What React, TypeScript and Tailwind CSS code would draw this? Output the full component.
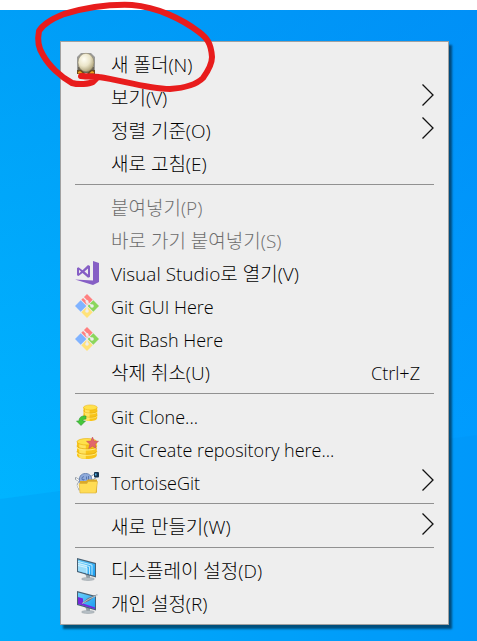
import clsx from "clsx";
import type { ReactNode } from "react";

const EggIcon = () => (
  <svg width="24" height="24" viewBox="0 0 24 24" aria-hidden="true">
    <defs>
      <radialGradient id="egg" cx="38%" cy="32%" r="75%">
        <stop offset="0" stopColor="#fffef4" />
        <stop offset="0.500" stopColor="#ebe5c9" />
        <stop offset="1" stopColor="#a3976c" />
      </radialGradient>
    </defs>
    <path d="M6 1h10l4 4v14H2V5z" fill="#9a9a98" />
    <path d="M3 15h16v6H3z" fill="#6b6558" />
    <path d="M2 18h5l3 4H2zM20 18h-5l-3 4h8z" fill="#6b4a1c" />
    <path d="M3 20l2-1 3 2.500H3zM19 20l-2-1-3 2.500h5z" fill="#f0a01c" />
    <ellipse cx="11" cy="10.500" rx="8" ry="9.200" fill="url(#egg)" stroke="#8b8162" strokeWidth="0.500" />
  </svg>
);

const VisualStudioIcon = () => (
  <svg width="24" height="24" viewBox="0 0 24 24" fill="#865fc5" aria-hidden="true">
    <path d="M18 0l6 2v19l-6 3L0 18.500l18 1z" />
    <path
      fillRule="evenodd"
      d="M2 7l1.500-.7L7.500 9.200 13 4l2 1v11l-2 .8-5.500-4.800-4 2.900L2 14.200zM4 8.800v3.600L6 10.600zM13 7.400L9.500 10.600 13 13.600z"
    />
  </svg>
);

const GitIcon = () => (
  <svg width="24" height="24" viewBox="0 0 24 24" aria-hidden="true">
    <path d="M12 0l5.700 5.700-5.700 5.700-5.700-5.700z" fill="#ff8080" />
    <path d="M18.300 6.300L24 12l-5.700 5.700L12.600 12z" fill="#8bd65c" />
    <path d="M12 12.600l5.700 5.700L12 24l-5.700-5.700z" fill="#ffe27a" />
    <path d="M5.700 6.300l5.700 5.700-5.700 5.700L0 12z" fill="#80b3ff" />
    <path d="M8 3l4 4v11M12 8l5 4" fill="none" stroke="#eee" strokeWidth="1.200" />
    <circle cx="12" cy="7.500" r="1.500" fill="#eee" />
    <circle cx="17" cy="12" r="1.800" fill="#eee" />
    <circle cx="12" cy="17" r="1.800" fill="#eee" />
  </svg>
);

const Cylinder = () => (
  <>
    <path d="M0 3v13c0 2 4 3.500 9 3.500s9-1.500 9-3.500V3z" fill="#f8c41a" />
    <path d="M2 5v13c1.500.8 4 1.300 6 1.300V6z" fill="#ffe35c" />
    <path
      d="M0 8c0 2 4 3 9 3s9-1 9-3M0 13c0 2 4 3 9 3s9-1 9-3"
      fill="none"
      stroke="#ffec80"
    />
    <path
      d="M0 7c0 2 4 3 9 3s9-1 9-3M0 12c0 2 4 3 9 3s9-1 9-3"
      fill="none"
      stroke="#e0a60c"
      strokeWidth="0.600"
    />
    <ellipse cx="9" cy="3.500" rx="9" ry="3" fill="#ffe14a" stroke="#e9b010" strokeWidth="0.600" />
  </>
);

const CloneIcon = () => (
  <svg width="24" height="24" viewBox="0 0 24 24" aria-hidden="true">
    <g transform="translate(8.500 0.500) scale(0.760 0.850)">
      <Cylinder />
    </g>
    <path
      d="M11 12c-4-.5-7 1-7 5H1.500l4.500 4.500 4.500-4.500H8c0-1.500 1-2 3-2z"
      fill="#45c83a"
      stroke="#2f9a30"
      strokeWidth="0.600"
    />
  </svg>
);

const CreateIcon = () => (
  <svg width="24" height="24" viewBox="0 0 24 24" aria-hidden="true">
    <g transform="translate(2 1) scale(1.100 1.080)">
      <Cylinder />
    </g>
    <path
      d="M17.500 0l1.600 4 4.400.3-3.400 2.900 1.200 4.300-3.800-2.300-3.800 2.300 1.200-4.300-3.400-2.900 4.400-.3z"
      fill="#e2666c"
      stroke="#c14a52"
      strokeWidth="0.500"
    />
  </svg>
);

const TortoiseIcon = () => (
  <svg width="24" height="24" viewBox="0 0 24 24" fill="none" aria-hidden="true">
    <path d="M0 8l5 3-2 4 2 5" stroke="#8b939b" strokeWidth="2.500" />
    <path d="M1 8.500l4 3-2 4 2 4" stroke="#fff" strokeWidth="1.500" />
    <path d="M14 10l6-4" stroke="#8b9dad" strokeWidth="5" />
    <path d="M14 10l6-4" stroke="#fff" strokeWidth="3" />
    <path d="M5 13C3 7 6 3.500 10.500 3.500S18 7 16.500 13z" fill="#8fabdc" stroke="#6b87b5" />
    <path d="M9 6.500L7 7.500v2l2 .5V9M11.500 6.500v3M13.500 6v4" stroke="#4a69a3" strokeWidth="0.800" />
    <rect x="19" y="2" width="5" height="5.500" rx="1" fill="#17344f" />
    <path d="M20 3.500h1.500v2H20z" fill="#52b7ed" />
    <path d="M5 11h6l2-1.500h9V22l-1 1H5z" fill="#dba928" />
    <path d="M4 13.500h8l1-2h9.500L21 23H5z" fill="#ffdc55" stroke="#d9ae35" strokeWidth="0.600" />
  </svg>
);

type MonitorProps = {
  id: string;
  children: ReactNode;
};
const Monitor = ({ id, children }: MonitorProps) => (
  <svg width="24" height="24" viewBox="0 0 24 24" aria-hidden="true">
    <defs>
      <linearGradient id={id} x1="0" y1="0" x2="1" y2="1">
        <stop offset="0" stopColor="#6dcffa" />
        <stop offset="1" stopColor="#199df1" />
      </linearGradient>
    </defs>
    <path d="M10 15l5 2v4h-3z" fill="#929ea6" />
    <ellipse cx="13" cy="21" rx="6.500" ry="1.500" fill="#b5bec4" stroke="#8e989e" strokeWidth="0.500" />
    <path d="M2 0l19 5v14.500L2 14z" fill="#486074" />
    <path d="M3 1.500L20 6v12L3 13z" fill={`url(#${id})`} />
    {children}
  </svg>
);

const DisplayIcon = () => (
  <Monitor id="display">
    <path d="M3 4.500l9 2.500v8.600L3 13z" fill="#9adcfa" />
    <path d="M3 3.500l14 3.600v10M3 5.500l11.500 3v8M3 7.500l9 2.200v6" fill="none" stroke="#e2f8ff" strokeWidth="0.800" />
  </Monitor>
);

const PersonalizeIcon = () => (
  <Monitor id="personal">
    <path d="M3 6l5 1.500v5L20 16.500V18L3 13z" fill="#7826d9" />
    <path d="M6 13l7-6 10-4-9 7z" fill="#6e7880" />
    <path d="M7 12.500l7-4.500 9-4" fill="none" stroke="#c5d0d7" strokeWidth="0.800" />
  </Monitor>
);

const Chevron = () => (
  <svg
    className="-mt-1"
    width="12"
    height="22"
    viewBox="0 0 12 22"
    fill="none"
    stroke="#111"
    strokeWidth="1.300"
    aria-hidden="true">
    <path d="M.5.5L11 11 .5 21.500" />
  </svg>
);

type Item = {
  label: string;
  icon?: ReactNode;
  shortcut?: string;
  submenu?: boolean;
  disabled?: boolean;
};

const groups: Item[][] = [
  [
    { label: "새 폴더(N)", icon: <EggIcon /> },
    { label: "보기(V)", submenu: true },
    { label: "정렬 기준(O)", submenu: true },
    { label: "새로 고침(E)" },
  ],
  [
    { label: "붙여넣기(P)", disabled: true },
    { label: "바로 가기 붙여넣기(S)", disabled: true },
    { label: "Visual Studio로 열기(V)", icon: <VisualStudioIcon /> },
    { label: "Git GUI Here", icon: <GitIcon /> },
    { label: "Git Bash Here", icon: <GitIcon /> },
    { label: "삭제 취소(U)", shortcut: "Ctrl+Z" },
  ],
  [
    { label: "Git Clone...", icon: <CloneIcon /> },
    { label: "Git Create repository here...", icon: <CreateIcon /> },
    { label: "TortoiseGit", icon: <TortoiseIcon />, submenu: true },
  ],
  [{ label: "새로 만들기(W)", submenu: true }],
  [
    { label: "디스플레이 설정(D)", icon: <DisplayIcon /> },
    { label: "개인 설정(R)", icon: <PersonalizeIcon /> },
  ],
];

const hasHangul = (text: string) => /[가-힣]/.test(text);

const MenuItem = ({ label, icon, shortcut, submenu, disabled }: Item) => (
  <button
    type="button"
    role="menuitem"
    aria-haspopup={submenu ? "menu" : undefined}
    disabled={disabled}
    className="flex h-[33px] w-full items-center gap-3 text-left text-black disabled:text-[#6d6d6d]">
    <span className="h-6 w-6 shrink-0">{icon}</span>
    <span
      className={clsx(
        "flex-1 whitespace-nowrap pt-0.5 leading-6",
        hasHangul(label) && "text-[19px]"
      )}>
      {label}
    </span>
    {shortcut && <span className="mr-3.5 pt-0.5">{shortcut}</span>}
    {submenu && <Chevron />}
  </button>
);

const Wallpaper = () => (
  <svg
    className="absolute inset-0 h-full w-full"
    viewBox="0 0 477 631"
    preserveAspectRatio="none"
    aria-hidden="true">
    <defs>
      <linearGradient id="sky" x1="0" y1="0" x2="1" y2="0">
        <stop offset="0" stopColor="#00b4ff" />
        <stop offset="1" stopColor="#009dff" />
      </linearGradient>
      <linearGradient id="shade" x1="0" y1="0" x2="0" y2="1">
        <stop offset="0" stopColor="#0078e8" stopOpacity="0.350" />
        <stop offset="1" stopColor="#0078e8" stopOpacity="0" />
      </linearGradient>
    </defs>
    <rect width="477" height="631" fill="url(#sky)" />
    <path d="M0 0h477v425L0 489z" fill="url(#shade)" />
    <path d="M0 489L477 425v206H0z" fill="#0086e4" fillOpacity="0.180" />
  </svg>
);

// Hand-drawn marker around the first entry
const Scribble = () => (
  <svg
    className="pointer-events-none absolute left-0 top-0"
    width="240"
    height="120"
    viewBox="0 0 240 120"
    fill="none"
    stroke="#e81c1c"
    strokeWidth="6"
    strokeLinecap="round"
    strokeLinejoin="round"
    aria-hidden="true">
    <path d="M81 76C89 77 93 76 99 77C121 80 147 89 170 89C184 88 197 84 203 78C208 71 212 64 212 57C211 43 207 38 199 32C182 19 157 7 132 5C106 4 81 9 64 14C54 18 43 24 39 31C37 41 39 49 43 55C49 66 61 77 72 83C79 85 89 84 93 82L97 78" />
  </svg>
);

export default function App() {
  return (
    <div className="relative flex min-h-screen flex-col bg-white">
      <main className="relative mt-2.5 flex-1 pb-4 pl-[60px] pr-7 pt-[31px]">
        <Wallpaper />
        <div
          role="menu"
          className="relative border border-[#a0a0a0] bg-[#eeeeee] px-3.5 py-[5px] font-['Open_Sans','Noto_Sans_CJK_KR',sans-serif] text-[18px] font-light leading-6 shadow-[3px_4px_2px_rgba(0,0,0,0.5)]">
          {groups.map((items, i) => (
            <div key={i} role="group">
              {i > 0 && <hr className="my-[5px] border-[#919191]" />}
              {items.map((item) => (
                <MenuItem key={item.label} {...item} />
              ))}
            </div>
          ))}
        </div>
      </main>
      <Scribble />
    </div>
  );
}
